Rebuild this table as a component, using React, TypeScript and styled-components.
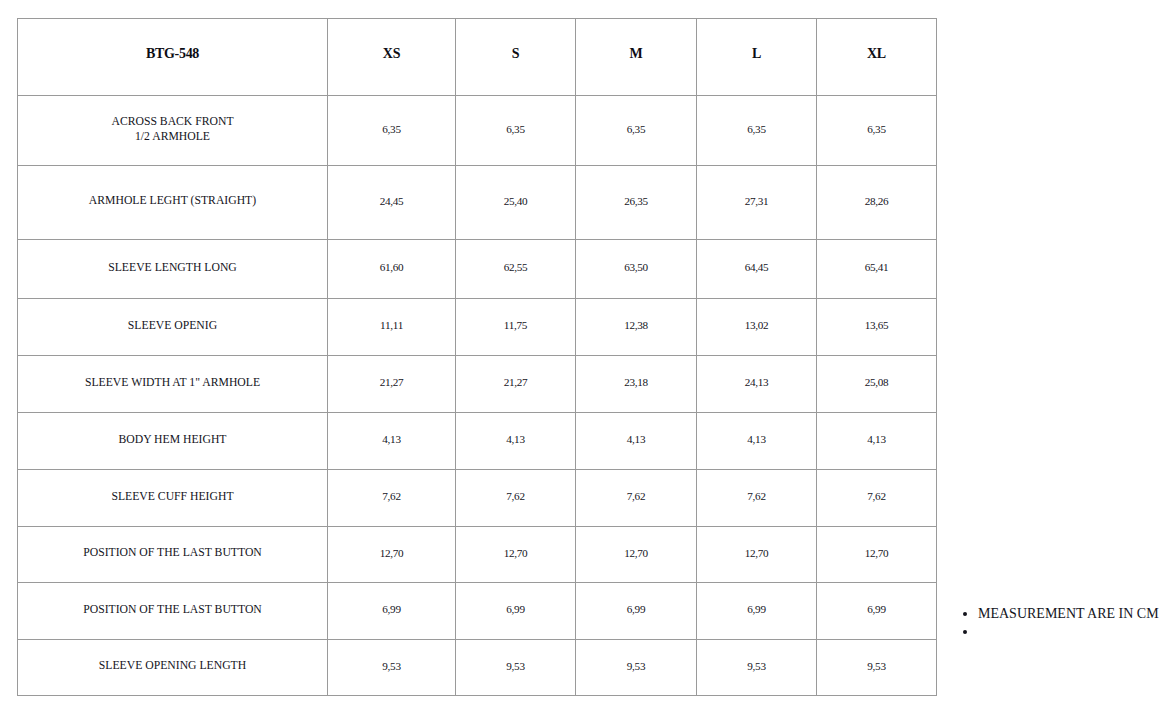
import React from 'react';
import styled, { createGlobalStyle } from 'styled-components';

const GlobalStyle = createGlobalStyle`
  html, body {
    margin: 0;
    padding: 0;
    background: #ffffff;
  }
  body {
    font-family: "Liberation Serif", "Times New Roman", serif;
    color: #111111;
  }
`;

const Page = styled.div`
  display: flex;
  align-items: flex-end;
  padding: 18px 0 0 17px;
`;

const SizeTable = styled.table`
  border-collapse: collapse;
  flex-shrink: 0;
`;

const HeadCell = styled.th<{ $w: number }>`
  width: ${p => p.$w}px;
  height: 69px;
  border: 1px solid #9a9a9a;
  font-size: 14px;
  font-weight: bold;
  text-align: center;
  vertical-align: middle;
  padding: 0 0 7px;
  letter-spacing: -0.3px;
  color: #0d0d14;
`;

const LabelCell = styled.td<{ $h: number }>`
  height: ${p => p.$h}px;
  border: 1px solid #9a9a9a;
  font-size: 11.7px;
  line-height: 15px;
  text-align: center;
  vertical-align: middle;
  padding: 0 0 4px;
  color: #14141c;
`;

const ValueCell = styled.td`
  border: 1px solid #9a9a9a;
  font-size: 11.2px;
  text-align: center;
  vertical-align: middle;
  padding: 0 0 4px;
  letter-spacing: -0.3px;
  color: #14141c;
`;

const Notes = styled.ul`
  margin: 0 0 55px;
  padding-left: 41px;
  font-size: 14px;
  line-height: 18px;
  color: #14141c;
  white-space: nowrap;
`;

const Note = styled.li`
  min-height: 18px;
`;

const columns = [
  { label: 'BTG-548', w: 309 },
  { label: 'XS', w: 127 },
  { label: 'S', w: 119 },
  { label: 'M', w: 120 },
  { label: 'L', w: 119 },
  { label: 'XL', w: 119 },
];

// row heights: rendered height minus border and bottom padding
const rows: { label: React.ReactNode; h: number; values: string[] }[] = [
  { label: <>ACROSS BACK FRONT<br />1/2 ARMHOLE</>, h: 65, values: ['6,35', '6,35', '6,35', '6,35', '6,35'] },
  { label: 'ARMHOLE LEGHT (STRAIGHT)', h: 69, values: ['24,45', '25,40', '26,35', '27,31', '28,26'] },
  { label: 'SLEEVE LENGTH LONG', h: 54, values: ['61,60', '62,55', '63,50', '64,45', '65,41'] },
  { label: 'SLEEVE OPENIG', h: 52, values: ['11,11', '11,75', '12,38', '13,02', '13,65'] },
  { label: 'SLEEVE WIDTH AT 1" ARMHOLE', h: 52, values: ['21,27', '21,27', '23,18', '24,13', '25,08'] },
  { label: 'BODY HEM HEIGHT', h: 52, values: ['4,13', '4,13', '4,13', '4,13', '4,13'] },
  { label: 'SLEEVE CUFF HEIGHT', h: 52, values: ['7,62', '7,62', '7,62', '7,62', '7,62'] },
  { label: 'POSITION OF THE LAST BUTTON', h: 51, values: ['12,70', '12,70', '12,70', '12,70', '12,70'] },
  { label: 'POSITION OF THE LAST BUTTON', h: 52, values: ['6,99', '6,99', '6,99', '6,99', '6,99'] },
  { label: 'SLEEVE OPENING LENGTH', h: 51, values: ['9,53', '9,53', '9,53', '9,53', '9,53'] },
];

const App: React.FC = () => {
  return <>
    <GlobalStyle />
    <Page>
      <SizeTable>
        <thead>
          <tr>
            {columns.map(c => <HeadCell key={c.label} $w={c.w}>{c.label}</HeadCell>)}
          </tr>
        </thead>
        <tbody>
          {rows.map((r, i) => (
            <tr key={i}>
              <LabelCell $h={r.h}>{r.label}</LabelCell>
              {r.values.map((v, j) => <ValueCell key={j}>{v}</ValueCell>)}
            </tr>
          ))}
        </tbody>
      </SizeTable>
      <Notes>
        <Note>MEASUREMENT ARE IN CM</Note>
        <Note></Note>
      </Notes>
    </Page>
  </>;
};

export default App;
